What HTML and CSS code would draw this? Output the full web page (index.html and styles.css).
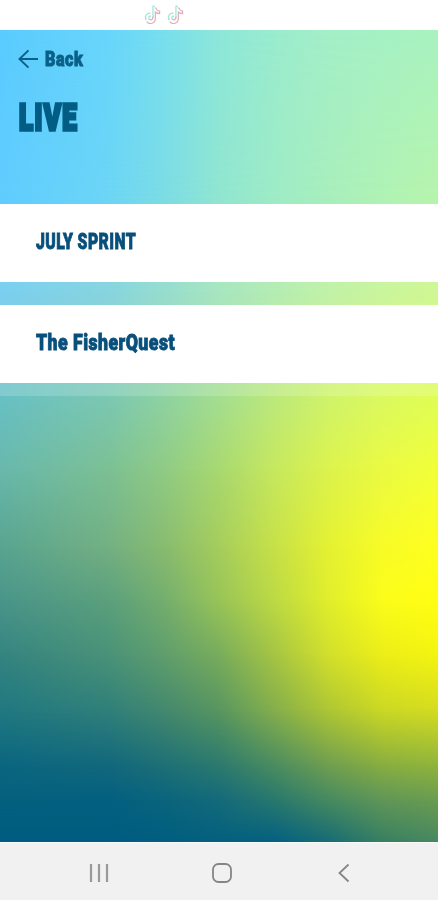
FILE: index.html
```
<!DOCTYPE html>
<html lang="en">
<head>
    <meta charset="utf-8">
    <title>Live</title>
    <link rel="stylesheet" href="styles.css">
</head>

<body>
    <div class="phone">
        <div class="status-bar">
            <svg class="note" viewBox="0 0 18 20">
                <path class="note-cyan" d="M10 14V1.500h2M7.500 8.500C3.500 8 0.500 12 3 16M8 12c-2-1-3 1-2 3"/>
                <path class="note-pink" d="M12.500 2.500c1 2.500 2 3.500 4.500 4v2.500c-2 0-3-.5-4.500-1.500v7a5 5 0 0 1-9 3M10 12c0 4-2 4-4 3"/>
            </svg>
            <svg class="note" viewBox="0 0 18 20">
                <path class="note-cyan" d="M10 14V1.500h2M7.500 8.500C3.500 8 0.500 12 3 16M8 12c-2-1-3 1-2 3"/>
                <path class="note-pink" d="M12.500 2.500c1 2.500 2 3.500 4.500 4v2.500c-2 0-3-.5-4.500-1.500v7a5 5 0 0 1-9 3M10 12c0 4-2 4-4 3"/>
            </svg>
        </div>

        <div class="screen">
            <div class="mesh mesh-1"></div>
            <div class="mesh mesh-2"></div>
            <div class="mesh mesh-3"></div>
            <div class="mesh mesh-4"></div>
            <div class="mesh mesh-5"></div>
            <div class="mesh mesh-6"></div>
            <div class="mesh mesh-7"></div>
            <div class="mesh mesh-8"></div>
            <div class="mesh mesh-9"></div>
            <div class="mesh mesh-10"></div>
            <div class="mesh mesh-11"></div>
            <div class="mesh mesh-12"></div>

            <div class="content">
                <div class="header">
                    <a class="back" href="#">
                        <svg class="arrow" viewBox="0 0 22 20"><path d="M21 10H1.500M11 1L1.500 10l9.500 9"/></svg>
                        <span>Back</span>
                    </a>
                    <h1><span>LIVE</span></h1>
                </div>
                <div class="list">
                    <a class="item" href="#"><span class="sprint">JULY SPRINT</span></a>
                    <a class="item" href="#"><span class="quest">The FisherQuest</span></a>
                </div>
            </div>
        </div>

        <div class="nav-bar">
            <svg viewBox="0 0 20 20"><path class="recents" d="M2 1v18M10 1v18M18 1v18"/></svg>
            <svg viewBox="0 0 20 20"><rect x="1" y="1" width="18" height="18" rx="5.500"/></svg>
            <svg viewBox="0 0 20 20"><path d="M14.500 1.500L5.500 10l9 8.500"/></svg>
        </div>
    </div>
</body>
</html>
```
FILE: styles.css
```
* {
    margin: 0;
    padding: 0;
    box-sizing: border-box;
}

body {
    font-family: Roboto, sans-serif;
    font-weight: 900;
    background: #fff;
}

.phone {
    height: 900px;
    display: flex;
    flex-direction: column;
    overflow: hidden;
}

.status-bar {
    height: 30px;
    padding: 5px 0 0 143px;
    display: flex;
    gap: 5px;
}
.note {
    width: 18px;
    height: 19px;
    fill: none;
    stroke-width: 1.3;
    opacity: 0.7;
}
.note-cyan {
    stroke: #74dccb;
}
.note-pink {
    stroke: #dd8a9f;
}

/* background: horizontal gradients, each one fading into the next */
.screen {
    height: 812px;
    display: grid;
}
.mesh, .content {
    grid-area: 1 / 1;
}
.content {
    z-index: 1;
}
.mesh {
    -webkit-mask-image: linear-gradient(transparent var(--from), #000 var(--to));
    mask-image: linear-gradient(transparent var(--from), #000 var(--to));
}
.mesh-1 {
    --from: -2px; --to: -1px;
    background: linear-gradient(90deg, #5acbff, #68d6fb 25%, #78dfee 37.5%, #8de7da 50%, #9aecce 62.5%, #a4efc8 75%, #a6f1c4 87.5%, #a8f2c0);
}
.mesh-2 {
    --from: 0px; --to: 170px;
    background: linear-gradient(90deg, #60ccff, #6cd5f5 25%, #7cdce4 37.5%, #90e5d0 50%, #9debc6 62.5%, #a8eebc 75%, #b0f2b4 87.5%, #b7f4ac);
}
.mesh-3 {
    --from: 170px; --to: 262px;
    background: linear-gradient(90deg, #60c6ec, #70ccd8 25%, #82d6c4 37.5%, #96e1b3 50%, #a6e8a4 62.5%, #b5ef96 75%, #bff388 87.5%, #c7f67e);
}
.mesh-4 {
    --from: 262px; --to: 367px;
    background: linear-gradient(90deg, #68c0c4, #7cc8b2 25%, #8ed2a2 37.5%, #a4de90 50%, #bce97c 62.5%, #cff36a 75%, #dbf95f 87.5%, #e0fd55);
}
.mesh-5 {
    --from: 367px; --to: 440px;
    background: linear-gradient(90deg, #68b8ac, #7cc094 25%, #90cb84 37.5%, #a8d870 50%, #c6e85e 62.5%, #dcf34d 75%, #eafa42 87.5%, #f2ff38);
}
.mesh-6 {
    --from: 440px; --to: 517px;
    background: linear-gradient(90deg, #58a490, #74b082 25%, #88bb70 37.5%, #a5cd5c 50%, #c6e048 62.5%, #e4f132 75%, #f8fc26 87.5%, #ffff20);
}
.mesh-7 {
    --from: 517px; --to: 570px;
    background: linear-gradient(90deg, #4a958a, #5ba07c 25%, #74ae6e 37.5%, #98c458 50%, #bcd944 62.5%, #e0ee2c 75%, #fbfd1a 87.5%, #fffe14);
}
.mesh-8 {
    --from: 570px; --to: 625px;
    background: linear-gradient(90deg, #348480, #4a9278 25%, #5f9e6c 37.5%, #78ac5c 50%, #a4c444 62.5%, #d2df2c 75%, #ecee18 87.5%, #f4f410);
}
.mesh-9 {
    --from: 625px; --to: 680px;
    background: linear-gradient(90deg, #207880, #30807a 25%, #44886e 37.5%, #589660 50%, #84ae4c 62.5%, #aec634 75%, #cbd824 87.5%, #d4dc20);
}
.mesh-10 {
    --from: 680px; --to: 735px;
    background: linear-gradient(90deg, #0a6680, #12687c 25%, #1e7076 37.5%, #2c7a6e 50%, #4a8c60 62.5%, #709e50 75%, #88ae40 87.5%, #90b43c);
}
.mesh-11 {
    --from: 735px; --to: 770px;
    background: linear-gradient(90deg, #04607e, #046080 25%, #0a647c 37.5%, #146a7a 50%, #28786e 62.5%, #468a60 75%, #609658 87.5%, #6a9c50);
}
.mesh-12 {
    --from: 770px; --to: 811px;
    background: linear-gradient(90deg, #005c80, #005c80 25%, #005e80 37.5%, #04607e 50%, #046080 62.5%, #186c74 75%, #388060 87.5%, #488860);
}

.header {
    height: 174px;
    padding: 17px 0 0 18px;
    color: #035c84;
}
.back {
    display: flex;
    align-items: center;
    gap: 6px;
    height: 24px;
    font-size: 20.5px;
    color: #0b6088;
    text-decoration: none;
}
/* squeezed and thickened into a condensed poster face */
.back span, h1 span, .item span {
    display: inline-block;
    transform-origin: left center;
    -webkit-text-stroke: 0.9px;
}
.back span {
    letter-spacing: 0.6px;
    transform: scaleX(0.79);
}
.arrow {
    width: 21px;
    height: 20px;
    fill: none;
    stroke: #0b6088;
    stroke-width: 2;
}
h1 {
    margin-top: 22px;
    padding-left: 1px;
    font-size: 37px;
    line-height: 50px;
    font-weight: 900;
}
h1 span {
    letter-spacing: 2px;
    -webkit-text-stroke: 3.4px;
    transform: scaleX(0.7);
}

.list {
    height: 192px;
    display: flex;
    flex-direction: column;
    gap: 23px;
    background: rgba(255, 255, 255, 0.17);
}
.item {
    height: 78px;
    padding: 0 0 4px 36px;
    display: flex;
    align-items: center;
    background: #fff;
    color: #084f7c;
    font-size: 22.5px;
    text-decoration: none;
}
.item span {
    letter-spacing: 0.6px;
}
.sprint {
    transform: scaleX(0.7);
}
.quest {
    transform: scaleX(0.785);
}

.nav-bar {
    height: 58px;
    padding: 2px 84px 0 89px;
    display: flex;
    align-items: center;
    justify-content: space-between;
    background: #f1f1f1;
    border-top: 1px solid #fafafa;
}
.nav-bar svg {
    width: 20px;
    height: 20px;
    fill: none;
    stroke: #858585;
    stroke-width: 1.800;
}
.nav-bar .recents {
    stroke: #999;
    stroke-width: 2.200;
}
```
